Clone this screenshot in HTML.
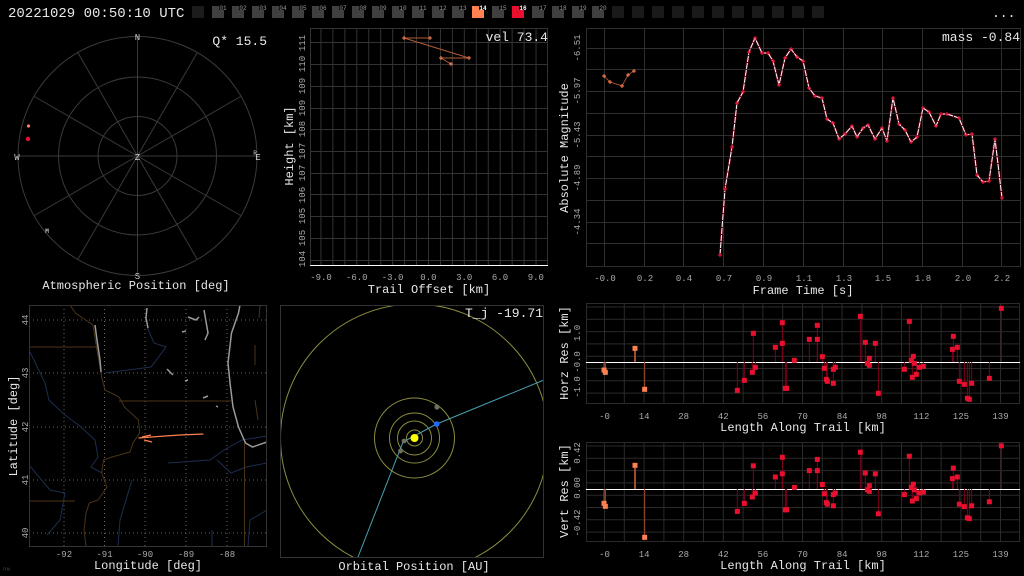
<!DOCTYPE html>
<html><head><meta charset="utf-8"><style>
html,body{margin:0;padding:0;background:#000;width:1024px;height:576px;overflow:hidden}
svg{display:block;font-family:"Liberation Mono",monospace}
</style></head><body>
<svg id="s" width="1024" height="576" viewBox="0 0 1024 576" xmlns="http://www.w3.org/2000/svg">
<rect width="1024" height="576" fill="#000"/>
<text x="8" y="17" fill="#e8e8e8" font-size="14">20221029 00:50:10 UTC</text>
<text x="992" y="17" fill="#e8e8e8" font-size="13">...</text>
<g id="topbar"></g>

<!-- Polar -->
<g stroke="#3a3a3a" fill="none" stroke-width="1">
<circle cx="137.5" cy="156" r="119.5"/><circle cx="137.5" cy="156" r="79"/><circle cx="137.5" cy="156" r="39.5"/>
</g>
<g id="spokes" stroke="#3a3a3a" stroke-width="1"></g>
<g fill="#ccc" font-size="9" text-anchor="middle">
<text x="137.5" y="40">N</text><text x="137.5" y="279">S</text><text x="17" y="160">W</text><text x="258" y="160">E</text><text x="137.5" y="160">Z</text>
<text x="255" y="155" font-size="6">R</text><text x="47" y="233" font-size="6" fill="#fff">M</text>
</g>
<circle cx="28.5" cy="126" r="1.6" fill="#ff8050"/>
<circle cx="28" cy="139" r="2.2" fill="#e8102e"/>
<text x="267" y="45" fill="#e8e8e8" font-size="13" text-anchor="end">Q* 15.5</text>
<text x="136" y="289" fill="#e8e8e8" font-size="12" text-anchor="middle">Atmospheric Position [deg]</text>

<!-- Height plot -->
<g id="hgrid" stroke="#333" stroke-width="1"></g>
<line x1="310" y1="265.5" x2="548" y2="265.5" stroke="#fff"/>
<g stroke="#b05a38" stroke-width="1" fill="none">
<polyline points="404,38 430,38"/><polyline points="404,38 469,58"/><polyline points="441,58 469,58"/><polyline points="441,58 451,64"/>
</g>
<g id="hpts" fill="#ff8050"></g>
<text x="548" y="41" fill="#e8e8e8" font-size="13" text-anchor="end">vel 73.4</text>
<text x="429" y="293" fill="#e8e8e8" font-size="12" text-anchor="middle">Trail Offset [km]</text>
<text transform="translate(293,146) rotate(-90)" fill="#e8e8e8" font-size="12" text-anchor="middle">Height [km]</text>
<g id="hlab" fill="#aaa" font-size="9"></g>

<!-- Light curve -->
<g id="lgrid" stroke="#2e2e2e" stroke-width="1"></g>
<rect x="586.5" y="28.5" width="434" height="238" fill="none" stroke="#2e2e2e"/>
<g id="lc"></g>
<text x="1020" y="41" fill="#e8e8e8" font-size="13" text-anchor="end">mass -0.84</text>
<text x="803" y="294" fill="#e8e8e8" font-size="12" text-anchor="middle">Frame Time [s]</text>
<text transform="translate(568,148) rotate(-90)" fill="#e8e8e8" font-size="12" text-anchor="middle">Absolute Magnitude</text>
<g id="llab" fill="#aaa" font-size="9"></g>

<!-- Map -->
<svg x="29" y="305" width="238" height="241" viewBox="29 305 238 241" overflow="hidden">
<g stroke="#666" stroke-width="1" stroke-dasharray="1,3">
<line x1="29" y1="320" x2="267" y2="320"/><line x1="29" y1="373" x2="267" y2="373"/><line x1="29" y1="427" x2="267" y2="427"/><line x1="29" y1="480" x2="267" y2="480"/><line x1="29" y1="533" x2="267" y2="533"/>
<line x1="64" y1="305" x2="64" y2="546"/><line x1="104.5" y1="305" x2="104.5" y2="546"/><line x1="145" y1="305" x2="145" y2="546"/><line x1="186" y1="305" x2="186" y2="546"/><line x1="227" y1="305" x2="227" y2="546"/>
</g>
<g stroke="#1c2e4e" stroke-width="1" fill="none">
<polyline points="29,350 45,383 49,400 65,415 81,427 95,440 98,457 91,467 102,473"/>
<polyline points="147,327 154,343 166,347 151,367 105,373"/>
<polyline points="168,463 210,460 224,450 242,440 267,436"/>
<polyline points="217,460 231,473 246,467 267,463"/>
<polyline points="29,465 50,490 65,493 60,520 47,535"/>
<polyline points="267,510 250,520 248,546"/>
<polyline points="132,480 120,520 118,546"/>
<polyline points="212,530 212,546"/>
</g>
<g stroke="#4a3418" stroke-width="1" fill="none">
<polyline points="70,305 75.4,313 93,325 96.5,347 100,367 101.7,377 105,390 119,397 124.5,407 138.5,420 139.6,433 133,443 130,452 112,457 103.5,460 101.7,473 107,487 98,500 89.4,503 86,513 84,530 86,546"/>
<polyline points="29,347 96.5,347"/><polyline points="119,401 231,401"/><polyline points="29,501 75,501"/>
<polyline points="244.5,443 244.5,546"/><polyline points="260,305 259,318"/><polyline points="255,345 255,365"/><polyline points="255,400 258,420"/>
</g>
<g stroke="#9a9a9a" stroke-width="1.5" fill="none">
<polyline points="240,305 238.5,313 231.5,333 228,363 230,383 233,407 238.5,427 245.5,443 252.5,447 267,442"/>
<polyline points="95,325 97,340 100,360 101,372"/>
<polyline points="147,308 146,318 148,328"/>
<polyline points="188,317 196,320 199,317"/><polyline points="204,310 208,333 205,340"/>
<polyline points="167,369 173,375"/><polyline points="185,381 188,380"/><polyline points="203,398 208,396"/><polyline points="216,406 218,407"/><polyline points="182,332 186,331"/>
</g>
<g stroke="#ff8050" stroke-width="1.2" fill="none">
<polyline points="138.5,438 165,436 180,435 203.4,434"/><polyline points="142,437 151,435"/><polyline points="144,440 152,442"/>
</g>
</svg>
<rect x="29.5" y="305.5" width="237" height="241" fill="none" stroke="#333"/>
<g fill="#aaa" font-size="9" text-anchor="middle">
<text x="64" y="557">-92</text><text x="104.5" y="557">-91</text><text x="145" y="557">-90</text><text x="186" y="557">-89</text><text x="227" y="557">-88</text>
<text transform="translate(28,320) rotate(-90)">44</text><text transform="translate(28,373) rotate(-90)">43</text><text transform="translate(28,427) rotate(-90)">42</text><text transform="translate(28,480) rotate(-90)">41</text><text transform="translate(28,533) rotate(-90)">40</text>
</g>
<text x="148" y="569" fill="#e8e8e8" font-size="12" text-anchor="middle">Longitude [deg]</text>
<text transform="translate(17,426) rotate(-90)" fill="#e8e8e8" font-size="12" text-anchor="middle">Latitude [deg]</text>
<text x="3" y="572" fill="#444" font-size="6">ᴿᴹ</text>

<!-- Orbital -->
<svg x="280" y="305" width="264" height="252" viewBox="280 305 264 252" overflow="hidden">
<g stroke="#8c8c40" fill="none" stroke-width="1">
<circle cx="414.5" cy="438" r="134"/><circle cx="414.5" cy="438" r="8"/><circle cx="414.5" cy="438" r="17"/><circle cx="414.5" cy="438" r="25"/><circle cx="414.5" cy="438" r="40"/>
</g>
<polyline points="358,557 403,442 436.7,424 544,380" stroke="#4aa0b0" stroke-width="1" fill="none"/>
<circle cx="414.5" cy="438" r="4" fill="#ffff00"/>
<circle cx="436.7" cy="424" r="2.8" fill="#1a6aff"/>
<circle cx="437" cy="407" r="2.6" fill="#707060"/><circle cx="404" cy="441" r="2.4" fill="#707060"/><circle cx="400.5" cy="451" r="2.4" fill="#707060"/>
</svg>
<rect x="280.5" y="305.5" width="263" height="252" fill="none" stroke="#333"/>
<text x="543" y="317" fill="#e8e8e8" font-size="13" text-anchor="end">T_j -19.71</text>
<text x="414" y="570" fill="#e8e8e8" font-size="12" text-anchor="middle">Orbital Position [AU]</text>

<!-- Residuals -->
<g id="res"></g>
<text x="803" y="431" fill="#e8e8e8" font-size="12" text-anchor="middle">Length Along Trail [km]</text>
<text x="803" y="569" fill="#e8e8e8" font-size="12" text-anchor="middle">Length Along Trail [km]</text>
<text transform="translate(568,353) rotate(-90)" fill="#e8e8e8" font-size="12" text-anchor="middle">Horz Res [km]</text>
<text transform="translate(568,491) rotate(-90)" fill="#e8e8e8" font-size="12" text-anchor="middle">Vert Res [km]</text>
</svg>
<script>
var NS="http://www.w3.org/2000/svg";
function el(p,t,a,txt){var e=document.createElementNS(NS,t);for(var k in a)e.setAttribute(k,a[k]);if(txt!=null)e.textContent=txt;document.getElementById(p).appendChild(e);return e;}
for(var i=0;i<32;i++){var x=192+i*20;var c="#404040";if(i==0)c="#1c1c1c";if(i>20)c="#1a1a1a";if(i==14)c="#ff8050";if(i==16)c="#e8102e";
el("topbar","rect",{x:x,y:6,width:12,height:12,fill:c});
if(i>=1&&i<=20){el("topbar","rect",{x:x+7,y:4,width:8,height:6,fill:"#000"});
el("topbar","text",{x:x+11,y:10,fill:(i==14||i==16)?"#fff":"#999","font-size":6,"text-anchor":"middle","font-weight":(i==14||i==16)?"bold":"normal"},(i<10?"0":"")+i);}}
for(var a=0;a<360;a+=30){var r=a*Math.PI/180;el("spokes","line",{x1:137.5,y1:156,x2:137.5+119.5*Math.sin(r),y2:156-119.5*Math.cos(r)});}
for(var k=-10;k<=10;k++){var x=428.5+k*11.95;if(x>310&&x<548)el("hgrid","line",{x1:x,y1:28,x2:x,y2:265});}
[42,64,86,108,129,151,173,194,216,238,260].forEach(function(y){el("hgrid","line",{x1:310,y1:y+.5,x2:548,y2:y+.5});});
el("hgrid","line",{x1:310.5,y1:28,x2:310.5,y2:265});el("hgrid","line",{x1:310,y1:28.5,x2:548,y2:28.5});el("hgrid","line",{x1:547.5,y1:28,x2:547.5,y2:265});
["111","110","109","109","108","107","107","106","105","105","104"].forEach(function(t,i){var y=[43,64,86,108,129,151,173,195,216,238,259][i];el("hlab","text",{transform:"translate(305,"+y+") rotate(-90)","text-anchor":"middle"},t);});
["-9.0","-6.0","-3.0","0.0","3.0","6.0","9.0"].forEach(function(t,i){el("hlab","text",{x:321+i*35.8,y:280,"text-anchor":"middle"},t);});
[[404,38],[430,38],[469,58],[441,58],[451,64]].forEach(function(p){el("hpts","rect",{x:p[0]-2,y:p[1]-.5,width:4,height:1});el("hpts","rect",{x:p[0]-.5,y:p[1]-2,width:1,height:4});});
var lx=[604,644,683,723,763,803,843,882,922,962,1001];
lx.forEach(function(x){el("lgrid","line",{x1:x+.5,y1:28,x2:x+.5,y2:266});});
[48,69,91,113,135,156,178,200,222,243].forEach(function(y){el("lgrid","line",{x1:586,y1:y+.5,x2:1020,y2:y+.5});});
["-0.0","0.2","0.4","0.7","0.9","1.1","1.3","1.5","1.8","2.0","2.2"].forEach(function(t,i){el("llab","text",{x:lx[i]+1,y:281,"text-anchor":"middle"},t);});
[["-6.51",48],["-5.97",91],["-5.43",135],["-4.89",178],["-4.34",222]].forEach(function(p){el("llab","text",{transform:"translate(580,"+p[1]+") rotate(-90)","text-anchor":"middle"},p[0]);});
var C=[[720,255],[725,189],[732,147],[737,103],[743,92],[749,52],[755,38],[762,53],[768,53],[773,61],[779,85],[785,58],[791,49],[797,57],[803,61],[809,88],[815,96],[822,98],[827,119],[833,123],[839,139],[845,134],[852,126],[857,137],[863,128],[868,125],[875,139],[882,128],[887,141],[893,98],[899,124],[905,130],[911,142],[917,137],[923,108],[929,112],[936,126],[941,114],[947,114],[959,118],[966,135],[972,134],[977,175],[983,182],[989,181],[995,139],[1002,198]];
var pts=C.map(function(p){return p.join(",")}).join(" ");
el("lc","polyline",{points:pts,stroke:"#5a0010","stroke-width":2.5,fill:"none","stroke-linejoin":"round"});
el("lc","polyline",{points:pts,stroke:"#fff","stroke-width":1,fill:"none","stroke-linejoin":"round","stroke-dasharray":"6,1"});
var O=[[604,76],[610,82],[622,86],[628,75],[634,71]];
el("lc","polyline",{points:O.map(function(p){return p.join(",")}).join(" "),stroke:"#a04a2a","stroke-width":1,fill:"none"});
function plus(g,x,y,c,s){el(g,"line",{x1:x-s,y1:y,x2:x+s,y2:y,stroke:c});el(g,"line",{x1:x,y1:y-s,x2:x,y2:y+s,stroke:c});}
C.forEach(function(p){plus("lc",p[0],p[1],"#ff1a40",2);});
O.forEach(function(p){plus("lc",p[0],p[1],"#ff8050",2);});
var R=[[562,271],[583,241],[607,217],[610,100],[616,202],[676,142],[697,68],[697,130],[706,265],[710,265],[733,181],[778,118],[802,76],[802,118],[817,170],[823,205],[829,238],[832,244],[850,208],[850,250],[856,202],[931,49],[946,127],[952,190],[958,175],[958,196],[976,130],[985,280],[1063,208],[1078,64],[1084,181],[1087,232],[1090,169],[1093,190],[1099,223],[1108,202],[1120,199],[1207,148],[1210,109],[1222,142],[1228,244],[1243,253],[1252,295],[1258,298],[1265,250],[1318,235],[1354,25]];
var OH=[[162,210],[166,217],[255,145],[284,268]];
var OV=[[162,610],[166,619],[255,496],[284,712]];
function panel(y0,y1,zero,ylabs,hpts,opts){
 var g="res";
 for(var x=604.5;x<1020;x+=19.8)el(g,"line",{x1:x,y1:y0,x2:x,y2:y1,stroke:"#2a2a2a"});
 for(var y=y0+4;y<y1;y+=12.3)el(g,"line",{x1:586,y1:y,x2:1020,y2:y,stroke:"#2a2a2a"});
 el(g,"rect",{x:586.5,y:y0+.5,width:433,height:y1-y0,fill:"none",stroke:"#2a2a2a"});
 el(g,"line",{x1:586,y1:zero+.5,x2:1020,y2:zero+.5,stroke:"#fff"});
 ["-0","14","28","42","56","70","84","98","112","125","139"].forEach(function(t,i){el(g,"text",{x:604.5+i*39.6,y:y1+16,fill:"#aaa","font-size":9,"text-anchor":"middle"},t);});
 ylabs.forEach(function(p){el(g,"text",{transform:"translate(580,"+p[1]+") rotate(-90)",fill:"#aaa","font-size":9,"text-anchor":"middle"},p[0]);});
 hpts.forEach(function(p){el(g,"line",{x1:p[0],y1:zero,x2:p[0],y2:p[1],stroke:"#80001a","stroke-width":1});});
 hpts.forEach(function(p){el(g,"rect",{x:p[0]-2.5,y:p[1]-2.5,width:5,height:5,fill:"#e8102e"});});
 opts.forEach(function(p,i){el(g,"line",{x1:p[0],y1:zero,x2:p[0],y2:p[1],stroke:"#a04a2a","stroke-width":i==2?2:1});});
 opts.forEach(function(p){el(g,"rect",{x:p[0]-2.5,y:p[1]-2.5,width:5,height:5,fill:"#ff8050"});});
}
panel(303,403,362,[["1.0",333],["-0.0",362],["-1.0",387]],
 R.map(function(p){return [p[0]/3+550,p[1]/3+300]}),OH.map(function(p){return [p[0]/3+550,p[1]/3+300]}));
panel(442,541,489,[["0.42",453],["0.00",488],["-0.42",523]],
 R.map(function(p){return [p[0]/3+550,489+(p[1]-187)/3*0.8]}),OV.map(function(p){return [p[0]/3+550,p[1]/3+300]}));
</script>
</body></html>
